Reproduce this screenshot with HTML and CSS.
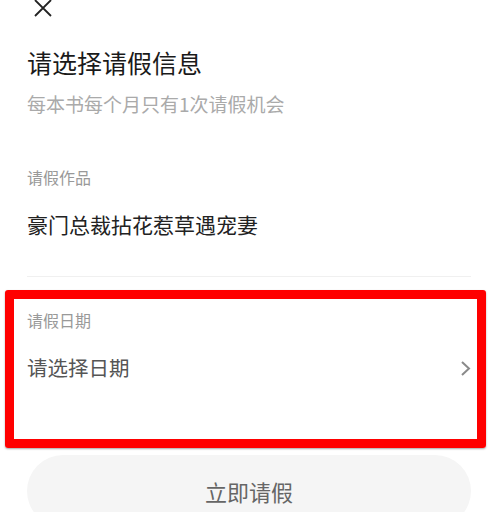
FILE: index.html
```html
<!DOCTYPE html>
<html lang="zh-CN">
<head>
  <meta charset="UTF-8">
  <title>请假</title>
  <link rel="stylesheet" href="styles.css">
</head>
<body>
  <div class="page">
    <!-- Close -->
    <div class="close">
      <svg width="18" height="18" viewBox="0 0 18 18">
        <path d="M1 1 L17 17 M17 1 L1 17" stroke="#222" stroke-width="1.8" fill="none"/>
      </svg>
    </div>

    <h1 class="title">请选择请假信息</h1>
    <p class="subtitle">每本书每个月只有1次请假机会</p>

    <!-- Book -->
    <div class="field">
      <div class="label">请假作品</div>
      <div class="value">豪门总裁拈花惹草遇宠妻</div>
    </div>

    <div class="divider"></div>

    <!-- Date -->
    <div class="field date-field">
      <div class="label">请假日期</div>
      <div class="value picker">
        <span>请选择日期</span>
        <svg class="chevron" width="11" height="17" viewBox="0 0 11 17">
          <path d="M2 2 L9 8.5 L2 15" stroke="#8a8a8a" stroke-width="2" fill="none"/>
        </svg>
      </div>
    </div>

    <button class="submit">立即请假</button>
  </div>

  <!-- annotation box -->
  <div class="highlight"></div>
</body>
</html>
```

FILE: styles.css
```css
body {
  margin: 0;
  font-family: "Noto Sans CJK SC", "Noto Sans", sans-serif;
  background: #fff;
  color: #222;
  position: relative;
  height: 512px;
  overflow: hidden;
}

.page {
  padding: 0 21px 0 27px;
}

.close {
  height: 17px;
  padding-left: 7px;
}

.close svg {
  display: block;
  margin-top: -1px;
}

.title {
  margin: 28px 0 0;
  font-size: 25px;
  font-weight: normal;
  line-height: 36px;
  color: #1a1a1a;
}

.subtitle {
  margin: 10px 0 0;
  font-size: 19px;
  line-height: 28px;
  color: #aaa;
}

.field {
  margin-top: 47px;
}

.label {
  font-size: 16px;
  line-height: 24px;
  color: #999;
}

.value {
  margin-top: 20px;
  font-size: 21px;
  line-height: 30px;
  color: #222;
}

.divider {
  margin-top: 37px;
  border-top: 1px solid #f0f0f0;
}

.date-field {
  margin-top: 31px;
}

.picker {
  display: flex;
  justify-content: space-between;
  align-items: center;
  font-size: 20.5px;
  color: #555;
}

.chevron {
  display: block;
  margin-top: 3px;
}

.submit {
  display: block;
  width: 100%;
  height: 72px;
  margin-top: 73px;
  border: none;
  border-radius: 36px;
  background: #f5f5f5;
  font-family: inherit;
  font-size: 22px;
  color: #666;
  padding: 0;
}

.highlight {
  position: absolute;
  left: 5px;
  top: 290px;
  width: 481px;
  height: 158px;
  box-sizing: border-box;
  border: 9.5px solid #f00;
  border-radius: 3px;
  box-shadow: 0 1px 2px rgba(0, 0, 0, 0.35);
}
```
